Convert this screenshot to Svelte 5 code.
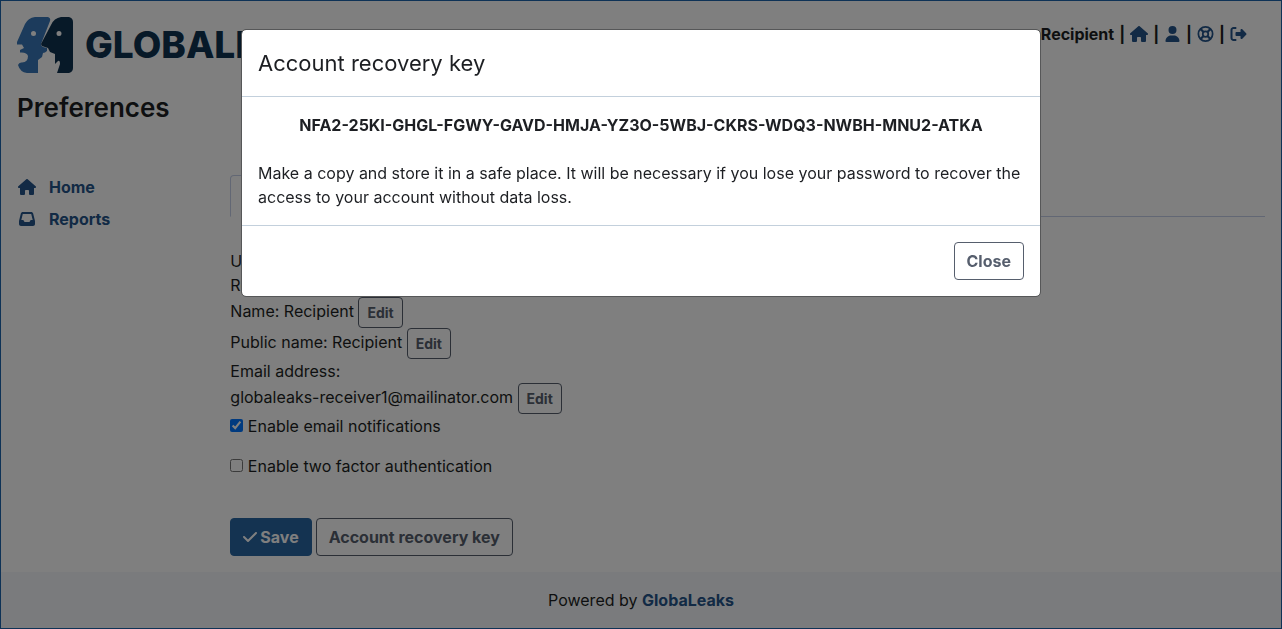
<script>
  let showModal = $state(true);
  let notifications = $state(true);
  let twoFactor = $state(false);

  const key = 'NFA2-25KI-GHGL-FGWY-GAVD-HMJA-YZ3O-5WBJ-CKRS-WDQ3-NWBH-MNU2-ATKA';
  const house =
    'M575.8 255.5c0 18-15 32.1-32 32.1h-32l.7 160.2c0 2.7-.2 5.4-.5 8.1V472c0 22.1-17.9 40-40 40H456c-1.1 0-2.2 0-3.3-.1c-1.4 .1-2.8 .1-4.2 .1H416 392c-22.1 0-40-17.9-40-40V448 384c0-17.7-14.3-32-32-32H256c-17.7 0-32 14.3-32 32v64 24c0 22.1-17.9 40-40 40H160 128.1c-1.5 0-3-.1-4.5-.2c-1.2 .1-2.4 .2-3.6 .2H104c-22.1 0-40-17.9-40-40V360c0-.9 0-1.9 .1-2.8V287.6H32c-18 0-32-14-32-32.1c0-9 3-17 10-24L266.4 8c7-7 15-8 22-8s15 2 21 7L564.8 231.5c8 7 12 15 11 24z';
</script>

<div class="page">
  <header>
    <a class="logo" href="#/" aria-label="GlobaLeaks">
      <svg width="56" height="56" viewBox="0 0 56 56" aria-hidden="true">
        <path fill="#3877b8" fill-rule="evenodd" d="M18 0H31Q34 1 33 4L24 27Q24 29 26 30L30 31V34Q28 36 26 36L25 40L21 43V56H10Q3 55 1 48Q2 45 5 45.500Q11 45 11 39Q10 35 3 35.500L3 33L7 31L5 27.500H0V25L8 7Q11 1 18 0ZM16.500 14a2.500 2.500 0 1 0 0 5a2.500 2.500 0 1 0 0-5Z" />
        <path fill="#0f3250" fill-rule="evenodd" d="M44 0H52Q56 1 56 5V51Q56 55 52 56H40L43 47Q43 43 41 44L38 47V37L33 35L31 31L25 29L24 27L34 8Q37 1 44 0ZM42 14a2.500 2.500 0 1 0 0 5a2.500 2.500 0 1 0 0-5Z" />
      </svg>
      <span>GLOBALEAKS</span>
    </a>
    <nav class="user" aria-label="Account">
      <span>Recipient</span>
      <span>|</span>
      <a href="#/home" aria-label="Home"><svg width="18" height="16" viewBox="0 0 576 512"><path d={house} /></svg></a>
      <span>|</span>
      <a href="#/preferences" aria-label="Preferences"><svg width="17" height="16" viewBox="-48 0 544 512"><path d="M224 256A128 128 0 1 0 224 0a128 128 0 1 0 0 256zm-45.7 48C79.8 304 0 383.8 0 482.3C0 498.7 13.3 512 29.7 512H418.3c16.4 0 29.7-13.3 29.7-29.7C448 383.8 368.2 304 269.7 304H178.3z" /></svg></a>
      <span>|</span>
      <a href="#/help" aria-label="Help"><svg width="17" height="16" viewBox="-16 0 544 512"><g fill="none" stroke="currentColor" stroke-width="56"><circle cx="256" cy="256" r="228" /><circle cx="256" cy="256" r="88" /><path stroke-width="68" d="M92 92L194 194M420 92L318 194M92 420L194 318M420 420L318 318" /></g></svg></a>
      <span>|</span>
      <a href="#/logout" aria-label="Logout"><svg width="17" height="16" viewBox="-16 0 544 512"><path d="M377.9 105.9L500.700 228.700c7.200 7.200 11.300 17.100 11.300 27.300s-4.100 20.100-11.300 27.300L377.900 406.100c-6.400 6.400-15 9.900-24 9.900c-18.700 0-33.900-15.200-33.900-33.900l0-62.100-128 0c-17.700 0-32-14.300-32-32l0-64c0-17.700 14.300-32 32-32l128 0 0-62.100c0-18.700 15.200-33.900 33.900-33.900c9 0 17.600 3.600 24 9.900zM160 96L96 96c-17.700 0-32 14.300-32 32l0 256c0 17.700 14.300 32 32 32l64 0c17.700 0 32 14.300 32 32s-14.300 32-32 32l-64 0c-53 0-96-43-96-96L0 128C0 75 43 32 96 32l64 0c17.700 0 32 14.300 32 32s-14.300 32-32 32z" /></svg></a>
    </nav>
  </header>

  <h1>Preferences</h1>

  <div class="columns">
    <nav class="side" aria-label="Main">
      <a href="#/home"><svg width="20" height="16" viewBox="0 0 576 512"><path d={house} /></svg>Home</a>
      <a href="#/reports"><svg width="20" height="16" viewBox="0 0 512 512"><path d="M121 32C91.600 32 66 52 58.900 80.500L1.900 308.400C.600 313.500 0 318.700 0 323.900V416c0 35.300 28.700 64 64 64H448c35.300 0 64-28.700 64-64V323.900c0-5.200-.600-10.400-1.900-15.500l-57-227.900C446 52 420.400 32 391 32H121zm0 64H391l48 192H387.800c-12.100 0-23.200 6.800-28.600 17.700l-14.300 28.600c-5.400 10.800-16.500 17.700-28.600 17.700H195.800c-12.100 0-23.200-6.800-28.600-17.700l-14.300-28.600c-5.400-10.800-16.500-17.700-28.600-17.700H73L121 96z" /></svg>Reports</a>
    </nav>
    <main>
      <div class="tabs"><a href="#/preferences">Preferences</a></div>
      <div class="line">Username: recipient</div>
      <div class="line">Role: Recipient</div>
      <div class="line">Name: Recipient <button class="btn small">Edit</button></div>
      <div class="line">Public name: Recipient <button class="btn small">Edit</button></div>
      <div class="line">Email address:</div>
      <div class="line">globaleaks-receiver1@mailinator.com <button class="btn small">Edit</button></div>
      <div class="check"><label><input type="checkbox" bind:checked={notifications} /> Enable email notifications</label></div>
      <div class="check"><label><input type="checkbox" bind:checked={twoFactor} /> Enable two factor authentication</label></div>
      <div class="actions">
        <button class="btn primary"><svg width="14" height="16" viewBox="0 0 448 512"><path d="M438.600 105.400c12.500 12.500 12.500 32.800 0 45.300l-256 256c-12.500 12.500-32.800 12.500-45.300 0l-128-128c-12.500-12.500-12.500-32.800 0-45.300s32.800-12.500 45.300 0L160 338.700 393.400 105.400c12.500-12.500 32.800-12.500 45.300 0z" /></svg>Save</button>
        <button class="btn" onclick={() => (showModal = true)}>Account recovery key</button>
      </div>
    </main>
  </div>

  <footer>Powered by <a href="#/about">GlobaLeaks</a></footer>
</div>

{#if showModal}
  <div class="backdrop">
    <div class="modal" role="dialog" aria-modal="true" aria-labelledby="modal-title">
      <div class="modal-head"><h2 id="modal-title">Account recovery key</h2></div>
      <div class="modal-body">
        <p class="key">{key}</p>
        <p>Make a copy and store it in a safe place. It will be necessary if you lose your password to recover the access to your account without data loss.</p>
      </div>
      <div class="modal-foot"><button class="btn" onclick={() => (showModal = false)}>Close</button></div>
    </div>
  </div>
{/if}

<style>
  :global(body) {
    margin: 0;
    background: #fff;
    color: #1d1f23;
    font: 16px/24px Inter, sans-serif;
  }
  .page, .page *, .backdrop, .backdrop * { box-sizing: border-box; }
  .page {
    display: flex;
    flex-direction: column;
    min-height: 100vh;
    border: 1px solid #1c65ac;
  }
  svg { fill: currentColor; flex: none; }
  a { color: #24548a; font-weight: 700; text-decoration: none; }
  header { display: flex; justify-content: space-between; align-items: flex-start; padding: 16px 16px 0; }
  .logo { display: flex; align-items: center; gap: 12px; color: #0f3250; font-size: 37px; line-height: 56px; font-weight: 800; }
  .user { display: flex; align-items: center; gap: 5px; padding: 5px 18px 0 0; font-weight: 700; }
  .user a { display: flex; }
  h1 { margin: 16px 16px 0; font-size: 26px; line-height: 38px; font-weight: 600; }
  .columns { display: flex; flex: 1; padding-top: 48px; }
  .side { display: flex; flex-direction: column; gap: 8px; width: 16.6667%; padding: 0 16px; }
  .side a { display: flex; align-items: center; gap: 12px; }
  main { flex: 1; min-width: 0; padding: 0 16px 16px; }
  .tabs { display: flex; border-bottom: 1px solid #c5cfe8; margin-bottom: 32px; }
  .tabs a { margin-bottom: -1px; padding: 8px 16px; border: 1px solid #c5cfe8; border-bottom-color: #fff; border-radius: 4px 4px 0 0; }
  .line .btn { vertical-align: middle; }
  .check + .check { margin-top: 16px; }
  input { margin: 0; }
  .actions { display: flex; gap: 4px; margin-top: 40px; }
  .btn {
    display: inline-flex;
    align-items: center;
    gap: 3px;
    padding: 6px 12px;
    border: 1px solid #565e6d;
    border-radius: 4px;
    background: transparent;
    color: #565e6d;
    font: 700 16px/24px Inter, sans-serif;
  }
  .btn.small { padding: 4px 8px; font-size: 14px; line-height: 21px; }
  .btn.primary { border-color: #2866a2; background: #2866a2; color: #fff; }
  footer { padding: 16px; background: #f5f7fa; text-align: center; }
  .backdrop { position: fixed; inset: 0; padding: 29px 16px; background: rgba(0, 0, 0, 0.5); }
  .modal { max-width: 800px; margin: 0 auto; border: 1px solid #565758; border-radius: 5px; background: #fff; background-clip: padding-box; }
  .modal-head { padding: 16px; border-bottom: 1px solid #c3d0dc; }
  h2 { margin: 0; font-size: 22px; line-height: 34px; font-weight: 400; }
  .modal-body { padding: 16px; }
  p { margin: 0; }
  .key { margin-bottom: 24px; text-align: center; font-weight: 700; overflow-wrap: anywhere; }
  .modal-foot { display: flex; justify-content: flex-end; padding: 16px; border-top: 1px solid #c3d0dc; }
</style>
